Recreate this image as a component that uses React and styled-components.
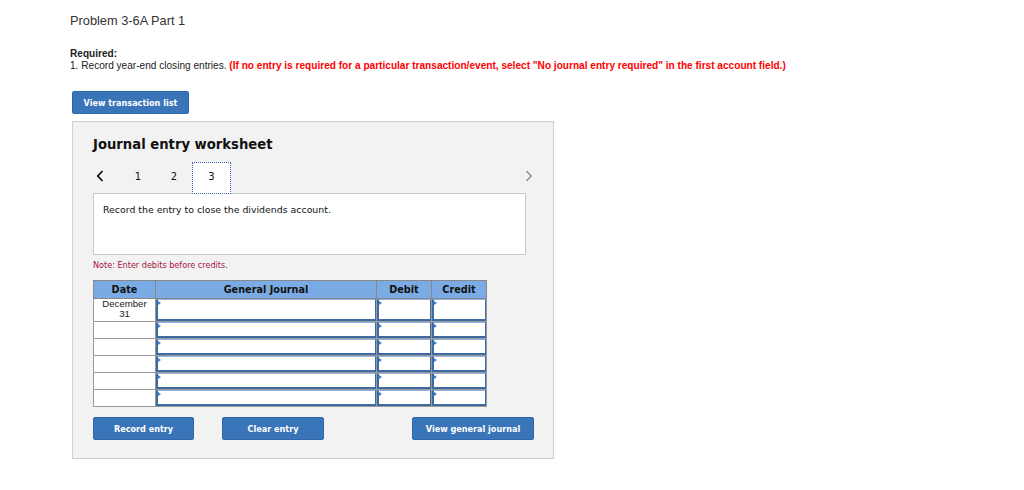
import React from "react";
import styled, { createGlobalStyle } from "styled-components";

const Global = createGlobalStyle`
  html, body { margin: 0; padding: 0; background: #fff; }
  body { font-family: "Liberation Sans", Arial, sans-serif; }
`;

const Page = styled.div`
  padding: 13px 0 0 70px;
  width: 954px;
`;

const Title = styled.h1`
  margin: 0;
  font-size: 12.8px;
  font-weight: normal;
  color: #333;
  line-height: 16px;
`;

const Required = styled.div`
  margin-top: 19px;
  font-size: 10.1px;
  line-height: 12px;
  color: #222;
`;

const Label = styled.div`
  font-weight: bold;
`;

const Warn = styled.span`
  color: #f00;
  font-weight: bold;
`;

const Btn = styled.button`
  display: inline-flex;
  align-items: center;
  justify-content: center;
  height: 23px;
  width: ${(p) => p.$w}px;
  padding: 0;
  border: 1px solid #2f67a8;
  border-radius: 2px;
  background: #3a75ba;
  color: #fff;
  font-family: "DejaVu Sans Condensed", "DejaVu Sans", sans-serif;
  font-weight: bold;
  font-size: 9px;
  cursor: pointer;
`;

const TopBtn = styled(Btn)`
  margin: 19px 0 0 2px;
`;

const Panel = styled.div`
  margin: 7px 0 0 2px;
  width: 482px;
  height: 338px;
  box-sizing: border-box;
  background: #f2f2f2;
  border: 1px solid #cfcfcf;
  padding: 15px 28px 0 20px;
  font-family: "DejaVu Sans", Verdana, sans-serif;
`;

const Heading = styled.h2`
  margin: 0;
  font-size: 13.2px;
  font-weight: bold;
  color: #111;
  line-height: 16px;
`;

const Nav = styled.div`
  margin: 9px -11px 0 0;
  display: flex;
  align-items: stretch;
  height: 31px;
  position: relative;
`;

const Arrow = styled.div`
  display: flex;
  align-items: center;
  justify-content: center;
  width: 14px;
  padding-bottom: 3px;
`;

const Tab = styled.div`
  width: ${(p) => (p.$active ? 39 : 36)}px;
  display: flex;
  align-items: center;
  justify-content: center;
  padding-bottom: 3px;
  font-size: 10px;
  color: #111;
  box-sizing: border-box;
  background: ${(p) => (p.$active ? "#fff" : "transparent")};
  border: ${(p) => (p.$active ? "1px dotted #2f67a8" : "1px solid transparent")};
  position: relative;
  z-index: 1;
  margin-bottom: -1px;
`;

const Spacer = styled.div`
  flex: 1;
`;

const Instruction = styled.div`
  width: 433px;
  height: 62px;
  box-sizing: border-box;
  background: #fff;
  border: 1px solid #c8c8c8;
  padding: 10px 9px;
  font-size: 9.4px;
  color: #111;
`;

const Note = styled.div`
  margin-top: 5px;
  font-size: 8.1px;
  color: #a8123e;
`;

const Table = styled.table`
  margin-top: 10px;
  border-collapse: collapse;
  width: 389px;
  table-layout: fixed;
  border: 1px solid #888;
`;

const Th = styled.th`
  background: #7aabe4;
  height: 17px;
  padding: 0;
  border: 1px solid #888;
  font-size: 9.7px;
  font-weight: bold;
  color: #111;
  width: ${(p) => p.$w}px;
`;

const DateCell = styled.td`
  background: #fff;
  border: 1px solid #9a9a9a;
  padding: 0;
  text-align: center;
  vertical-align: top;
  font-family: "Liberation Sans", Arial, sans-serif;
  font-size: 9.6px;
  line-height: 10px;
  color: #222;
  height: ${(p) => p.$h}px;
`;

const InputCell = styled.td`
  padding: 0;
  border: 1px solid #9a9a9a;
  height: ${(p) => p.$h}px;
`;

const Field = styled.div`
  position: relative;
  height: ${(p) => p.$h}px;
  box-sizing: border-box;
  background: #fff;
  border-left: 2px solid #3d6aa3;
  border-top: 1px solid #8fb0d8;
  border-bottom: 2px solid #3d6aa3;
  border-right: 1px solid #3d6aa3;
  &::before {
    content: "";
    position: absolute;
    left: 0;
    top: 1px;
    border-left: 3px solid #3f7fd0;
    border-top: 2px solid transparent;
    border-bottom: 2px solid transparent;
  }
`;

const Buttons = styled.div`
  margin-top: 10px;
  display: flex;
  width: 441px;
`;

const Gap = styled.div`
  width: ${(p) => p.$w}px;
`;

const rows = [
  { h: 22, date: ["December", "31"] },
  { h: 16 },
  { h: 16 },
  { h: 16 },
  { h: 16 },
  { h: 16 },
];

export default function App() {
  return (
    <>
      <Global />
      <Page>
        <Title>Problem 3-6A Part 1</Title>
        <Required>
          <Label>Required:</Label>
          <div>
            1. Record year-end closing entries.{" "}
            <Warn>
              (If no entry is required for a particular transaction/event, select "No journal entry required" in the first account field.)
            </Warn>
          </div>
        </Required>
        <TopBtn $w={117}>View transaction list</TopBtn>
        <Panel>
          <Heading>Journal entry worksheet</Heading>
          <Nav>
            <Arrow>
              <svg width="8" height="12" viewBox="0 0 8 12">
                <path d="M6.5 1 L1.8 6 L6.5 11" stroke="#111" strokeWidth="1.8" fill="none" />
              </svg>
            </Arrow>
            <Gap $w={13} />
            <Tab>1</Tab>
            <Tab>2</Tab>
            <Tab $active>3</Tab>
            <Spacer />
            <Arrow>
              <svg width="8" height="12" viewBox="0 0 8 12">
                <path d="M1.5 1 L6.2 6 L1.5 11" stroke="#888" strokeWidth="1.3" fill="none" />
              </svg>
            </Arrow>
          </Nav>
          <Instruction>Record the entry to close the dividends account.</Instruction>
          <Note>Note: Enter debits before credits.</Note>
          <Table>
            <thead>
              <tr>
                <Th $w={61}>Date</Th>
                <Th $w={220}>General Journal</Th>
                <Th $w={54}>Debit</Th>
                <Th $w={54}>Credit</Th>
              </tr>
            </thead>
            <tbody>
              {rows.map((r, i) => (
                <tr key={i}>
                  <DateCell $h={r.h}>
                    {r.date && (
                      <>
                        {r.date[0]}
                        <br />
                        {r.date[1]}
                      </>
                    )}
                  </DateCell>
                  <InputCell $h={r.h}><Field $h={r.h} /></InputCell>
                  <InputCell $h={r.h}><Field $h={r.h} /></InputCell>
                  <InputCell $h={r.h}><Field $h={r.h} /></InputCell>
                </tr>
              ))}
            </tbody>
          </Table>
          <Buttons>
            <Btn $w={101}>Record entry</Btn>
            <Gap $w={28} />
            <Btn $w={102}>Clear entry</Btn>
            <Spacer />
            <Btn $w={122}>View general journal</Btn>
          </Buttons>
        </Panel>
      </Page>
    </>
  );
}
